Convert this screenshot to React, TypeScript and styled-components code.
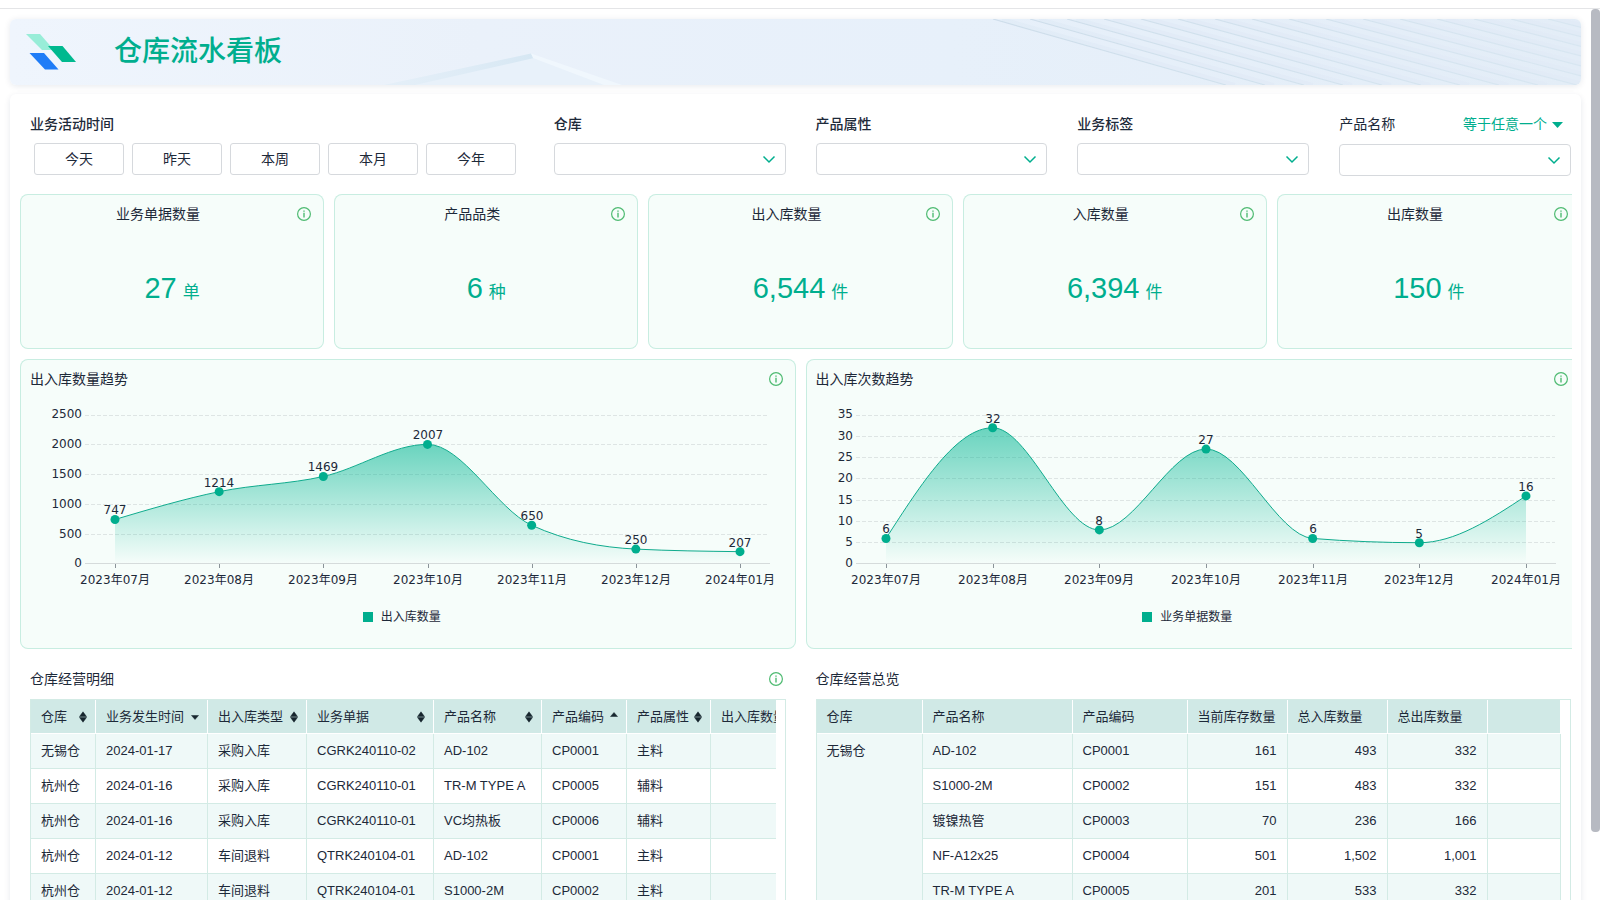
import React, { useEffect, useLayoutEffect, useRef, useState } from 'react';
import styled, { createGlobalStyle, css } from 'styled-components';

const ACCENT = '#00ae8e';
const INK = '#1d2939';
const LINE = '#d3ebe5';

const GlobalStyle = createGlobalStyle`
  *, *::before, *::after { box-sizing: border-box; }
  body {
    margin: 0;
    background: #fff;
    color: ${INK};
    font-family: "Liberation Sans", "Noto Sans CJK SC", sans-serif;
    font-size: 14px;
    line-height: 20px;
  }
  button, select { font: inherit; color: inherit; }
`;

/* ---------- page frame ---------- */

const Page = styled.div`
  position: relative;
  height: 100vh;
  padding-top: 8px;
  overflow: hidden;
`;

const Scroller = styled.div`
  height: 100%;
  overflow-y: auto;
  scrollbar-width: none;
  border-top: 1px solid #e4e5e7;
  padding: 10px 19px 10px 10px;
`;

const Thumb = styled.div`
  position: absolute;
  right: 0;
  top: 9px;
  width: 9px;
  border-radius: 4px;
  background: #b7bac2;
`;

const Banner = styled.header`
  position: relative;
  display: flex;
  align-items: center;
  height: 66px;
  padding-left: 16px;
  gap: 38px;
  border-radius: 6px;
  overflow: hidden;
  background: linear-gradient(90deg, #eff5fd 0%, #eaf1fa 30%, #e7f0fa 60%, #e3edf7 100%);
`;

const BannerShadow = styled.div`
  border-radius: 6px;
  box-shadow: 0 1px 6px rgba(20, 40, 80, 0.1);
`;

const BannerArt = styled.svg`
  position: absolute;
  inset: 0;
  width: 100%;
  height: 100%;
`;

const Logo = styled.svg`
  position: relative;
  flex: none;
`;

const Title = styled.h1`
  position: relative;
  margin: 0;
  font-size: 28px;
  line-height: 40px;
  font-weight: 500;
  color: ${ACCENT};
`;

const Panel = styled.main`
  margin-top: 9px;
  padding: 0 9px 10px 0;
  border-radius: 6px;
  box-shadow: 0 2px 6px rgba(20, 40, 80, 0.1);
  background: #fff;
`;

const Clip = styled.div`
  overflow: hidden;
`;

const Board = styled.div`
  width: calc(100% + 9px);
  margin-left: 5px;
`;

/* ---------- filters ---------- */

const Filters = styled.form`
  display: grid;
  grid-template-columns: 2fr repeat(4, 1fr);
  height: 100px;
  padding-top: 20px;
`;

const Field = styled.div`
  padding: 0 15px;
  min-width: 0;
`;

const LabelRow = styled.div<{ $loose?: boolean }>`
  display: flex;
  justify-content: space-between;
  height: 20px;
  margin-bottom: ${(p) => (p.$loose ? 10 : 9)}px;
`;

const Label = styled.label<{ $plain?: boolean }>`
  font-weight: ${(p) => (p.$plain ? 400 : 500)};
  color: ${INK};
`;

const DateButtons = styled.div`
  display: flex;
  gap: 8px;
  padding-left: 4px;
`;

const DateButton = styled.button`
  width: 90px;
  height: 32px;
  padding: 0;
  border: 1px solid #d6d9dd;
  border-radius: 3px;
  background: #fff;
`;

const SelectBox = styled.div`
  position: relative;
  svg {
    position: absolute;
    right: 10px;
    top: 12px;
    pointer-events: none;
  }
`;

const Select = styled.select`
  appearance: none;
  display: block;
  width: 100%;
  height: 32px;
  padding: 0 30px 0 10px;
  border: 1px solid #d6d9dd;
  border-radius: 4px;
  background: #fff;
`;

const MatchBox = styled.div`
  position: relative;
  margin-right: 8px;
  color: ${ACCENT};
  svg {
    position: absolute;
    right: 0;
    top: 8px;
    pointer-events: none;
  }
`;

const MatchSelect = styled.select`
  appearance: none;
  display: block;
  height: 20px;
  padding: 0 16px 0 0;
  border: 0;
  background: transparent;
`;

/* ---------- widgets ---------- */

const Row = styled.section<{ $cols: number }>`
  display: grid;
  grid-template-columns: repeat(${(p) => p.$cols}, minmax(0, 1fr));
  gap: 10px;
  margin: 0 5px 10px;
`;

const Card = styled.article<{ $tinted?: boolean; $height: number }>`
  display: flex;
  flex-direction: column;
  min-height: ${(p) => p.$height}px;
  border-radius: 8px;
  ${(p) =>
    p.$tinted &&
    css`
      background: #f6fdfa;
      box-shadow: inset 0 0 0 1px #c8ede1;
    `}
`;

const CardHead = styled.div<{ $center?: boolean }>`
  display: flex;
  align-items: center;
  height: 40px;
  padding: 0 12px 0 ${(p) => (p.$center ? 0 : 10)}px;
  h2 {
    flex: 1;
    margin: 0;
    font-size: 14px;
    font-weight: 400;
    text-align: left;
    ${(p) => p.$center && css`text-align: center;`}
  }
`;

const InfoButton = styled.button`
  display: flex;
  width: 16px;
  height: 16px;
  padding: 1px;
  border: 0;
  background: none;
`;

const Figure = styled.p`
  display: flex;
  flex: 1;
  justify-content: center;
  align-items: baseline;
  gap: 6px;
  margin: 0;
  padding-top: 34px;
  font-size: 29px;
  line-height: 40px;
  color: ${ACCENT};
  small {
    font-size: 17px;
  }
`;

const Plot = styled.div`
  min-width: 0;
  height: 200px;
  svg {
    display: block;
  }
  text {
    font-family: "DejaVu Sans", "Noto Sans CJK SC", sans-serif;
    font-size: 12px;
    fill: ${INK};
  }
`;

const Legend = styled.div`
  display: flex;
  justify-content: center;
  align-items: center;
  gap: 8px;
  height: 36px;
  padding-right: 12px;
  font-size: 12px;
  &::before {
    content: '';
    width: 10px;
    height: 10px;
    background: ${ACCENT};
  }
`;

/* ---------- tables ---------- */

const Frame = styled.div`
  flex: 1;
  margin: 0 10px;
  padding-right: 9px;
  border: 1px solid ${LINE};
`;

const Table = styled.table<{ $min?: number }>`
  width: 100%;
  min-width: ${(p) => p.$min ?? 0}px;
  table-layout: fixed;
  border-collapse: separate;
  border-spacing: 0;
  font-size: 13px;
`;

const Th = styled.th`
  height: 34px;
  padding: 0 8px 0 10px;
  border-right: 1px solid #fff;
  border-bottom: 1px solid #fff;
  background: #d0e9e6;
  font-weight: 400;
  text-align: left;
  white-space: nowrap;
`;

const ThInner = styled.span`
  display: flex;
  justify-content: space-between;
  align-items: center;
`;

const Td = styled.td<{ $stripe?: boolean; $num?: boolean }>`
  height: 35px;
  padding: 7px 10px;
  border-right: 1px solid ${LINE};
  border-bottom: 1px solid ${LINE};
  background: ${(p) => (p.$stripe ? '#eff9f8' : '#fff')};
  text-align: ${(p) => (p.$num ? 'right' : 'left')};
  vertical-align: top;
  white-space: nowrap;
`;

/* ---------- drawings ---------- */

const Chevron = () => (
  <svg width="14" height="9" viewBox="0 0 14 9" fill="none" stroke={ACCENT} strokeWidth="1.5" aria-hidden="true">
    <path d="M1.5 1.5 7 7l5.5-5.5" />
  </svg>
);

const InfoIcon = () => (
  <svg width="14" height="14" viewBox="0 0 14 14" fill="none" stroke="#4fbb72" aria-hidden="true">
    <circle cx="7" cy="7" r="6.4" strokeWidth="1.2" />
    <path d="M7 5.8v4.6M7 3.4v1.3" strokeWidth="1.4" />
  </svg>
);

type Sort = 'both' | 'up' | 'down' | null;

const SortIcon = ({ sort }: { sort: Sort }) => (
  <svg width="8" height="12" viewBox="0 0 8 12" fill="#17262e" aria-hidden="true">
    {sort === 'both' && <path d="M.5 5.6 4 .8l3.500 4.800zM.5 6.400 4 11.200l3.500-4.800z" stroke="#17262e" strokeWidth="0.5" strokeLinejoin="round" />}
    {sort === 'up' && <path d="M.5 5.5 4 1.500l3.500 4z" stroke="#17262e" strokeWidth="0.5" strokeLinejoin="round" />}
    {sort === 'down' && <path d="M.5 4.500 4 8.500l3.500-4z" stroke="#17262e" strokeWidth="0.5" strokeLinejoin="round" />}
  </svg>
);

const ridges = Array.from({ length: 17 }, (_, i) => i);

const BannerDrawing = () => (
  <BannerArt viewBox="0 0 1571 66" preserveAspectRatio="xMaxYMid slice" aria-hidden="true">
    <defs>
      <linearGradient id="fold" x1="0" x2="1" y1="0" y2="0">
        <stop offset="0" stopColor="#dfecf6" stopOpacity="0.4" />
        <stop offset="1" stopColor="#d6e7f3" />
      </linearGradient>
      <linearGradient id="ridgeFade" x1="983" x2="1571" y1="0" y2="0" gradientUnits="userSpaceOnUse">
        <stop offset="0" stopColor="#c9dae8" />
        <stop offset="0.6" stopColor="#d1e0ed" />
        <stop offset="1" stopColor="#d6e5f0" />
      </linearGradient>
    </defs>
    <path d="M374 66 522 35 524 39 595 66z" fill="#e8f1fa" />
    <path d="M374 66 521 34.5 524 39 405 66z" fill="url(#fold)" />
    <path d="M521 34.5 612 66H594L523 39z" fill="#f0f7fd" />
    {ridges.map((i) => {
      const top = 983 + i * 37;
      const end = 1216 + i * 39;
      return (
        <g key={i} stroke="url(#ridgeFade)">
          <path d={`M${top + 9} 0 ${end + 9} 66`} strokeWidth="4" opacity="0.15" />
          <path d={`M${top} 0 ${end} 66`} strokeWidth="1.2" opacity="0.85" />
        </g>
      );
    })}
  </BannerArt>
);

/* ---------- area chart ---------- */

type Point = [number, number];

// Monotone cubic interpolation, so the curve never overshoots a value.
function monotonePath(pts: Point[]): string {
  const n = pts.length;
  const slope = (i: number) => (pts[i + 1][1] - pts[i][1]) / (pts[i + 1][0] - pts[i][0]);
  const m: number[] = new Array(n).fill(0);
  for (let i = 1; i < n - 1; i++) {
    const a = slope(i - 1);
    const b = slope(i);
    m[i] = a * b <= 0 ? 0 : Math.sign(a) * Math.min(Math.abs(a), Math.abs(b), Math.abs(a + b) / 4) * 2;
  }
  m[0] = (3 * slope(0) - m[1]) / 2;
  m[n - 1] = (3 * slope(n - 2) - m[n - 2]) / 2;
  let d = `M${pts[0][0]} ${pts[0][1]}`;
  for (let i = 0; i < n - 1; i++) {
    const dx = (pts[i + 1][0] - pts[i][0]) / 3;
    d += `C${pts[i][0] + dx} ${pts[i][1] + m[i] * dx} ${pts[i + 1][0] - dx} ${pts[i + 1][1] - m[i + 1] * dx} ${pts[i + 1][0]} ${pts[i + 1][1]}`;
  }
  return d;
}

const MONTHS = ['2023年07月', '2023年08月', '2023年09月', '2023年10月', '2023年11月', '2023年12月', '2024年01月'];
const TOP = 16;
const BASE = 165;
const EDGE = 30;
const RIGHT = 26;

interface ChartProps {
  id: string;
  name: string;
  values: number[];
  max: number;
  step: number;
  left: number;
}

function AreaChart({ id, name, values, max, step, left }: ChartProps) {
  const box = useRef<HTMLDivElement>(null);
  const [width, setWidth] = useState(776);
  useLayoutEffect(() => {
    const el = box.current;
    if (!el) return;
    const measure = () => setWidth(Math.round(el.clientWidth));
    measure();
    const ro = new ResizeObserver(measure);
    ro.observe(el);
    return () => ro.disconnect();
  }, []);

  const right = width - RIGHT;
  const y = (v: number) => BASE - ((BASE - TOP) * v) / max;
  const gap = (right - left - EDGE * 2) / (values.length - 1);
  const pts = values.map((v, i): Point => [left + EDGE + gap * i, y(v)]);
  const path = monotonePath(pts);
  const ticks: number[] = [];
  for (let v = 0; v <= max; v += step) ticks.push(v);

  return (
    <Plot ref={box}>
      <svg width={width} height="200" role="img" aria-label={name}>
        <defs>
          <linearGradient id={id} x1="0" x2="0" y1="0" y2="1">
            <stop offset="0" stopColor="#00b592" stopOpacity="0.57" />
            <stop offset="1" stopColor="#00b592" stopOpacity="0" />
          </linearGradient>
        </defs>
        {ticks.map((v) => (
          <g key={v}>
            {v > 0 && (
              <line x1={left} x2={right - 1} y1={Math.floor(y(v)) + 0.5} y2={Math.floor(y(v)) + 0.5} stroke="#dee5e4" strokeDasharray="4 2" />
            )}
            <text x={left - 3} y={Math.ceil(y(v)) + 3} textAnchor="end">
              {v}
            </text>
          </g>
        ))}
        <path d={`${path}L${pts[pts.length - 1][0]} ${BASE}L${pts[0][0]} ${BASE}Z`} fill={`url(#${id})`} />
        <line x1={left} x2={right} y1={BASE - 0.5} y2={BASE - 0.5} stroke="#d5dbdb" />
        <path d={path} fill="none" stroke="#0fab8d" />
        {pts.map(([px, py], i) => (
          <g key={i}>
            <line x1={Math.round(px) + 0.5} x2={Math.round(px) + 0.5} y1={BASE} y2={BASE + 4} stroke="#8a9399" />
            <circle cx={px} cy={py} r="4.5" fill={ACCENT} />
            <text x={Math.round(px)} y={Math.round(py) - 5} textAnchor="middle">
              {values[i]}
            </text>
            <text x={Math.round(px)} y="185" textAnchor="middle">
              {MONTHS[i]}
            </text>
          </g>
        ))}
      </svg>
    </Plot>
  );
}

/* ---------- data ---------- */

const FIGURES = [
  ['业务单据数量', '27', '单'],
  ['产品品类', '6', '种'],
  ['出入库数量', '6,544', '件'],
  ['入库数量', '6,394', '件'],
  ['出库数量', '150', '件'],
];

const DETAIL_COLS: [string, number, Sort][] = [
  ['仓库', 65, 'both'],
  ['业务发生时间', 112, 'down'],
  ['出入库类型', 99, 'both'],
  ['业务单据', 127, 'both'],
  ['产品名称', 108, 'both'],
  ['产品编码', 85, 'up'],
  ['产品属性', 84, 'both'],
  ['出入库数量', 100, null],
];

const DETAIL_ROWS = [
  ['无锡仓', '2024-01-17', '采购入库', 'CGRK240110-02', 'AD-102', 'CP0001', '主料', ''],
  ['杭州仓', '2024-01-16', '采购入库', 'CGRK240110-01', 'TR-M TYPE A', 'CP0005', '辅料', ''],
  ['杭州仓', '2024-01-16', '采购入库', 'CGRK240110-01', 'VC均热板', 'CP0006', '辅料', ''],
  ['杭州仓', '2024-01-12', '车间退料', 'QTRK240104-01', 'AD-102', 'CP0001', '主料', ''],
  ['杭州仓', '2024-01-12', '车间退料', 'QTRK240104-01', 'S1000-2M', 'CP0002', '主料', ''],
];

const SUMMARY_COLS: [string, number | undefined][] = [
  ['仓库', 106],
  ['产品名称', 150],
  ['产品编码', 115],
  ['当前库存数量', 100],
  ['总入库数量', 100],
  ['总出库数量', 100],
  ['', undefined],
];

const SUMMARY_ROWS = [
  ['AD-102', 'CP0001', '161', '493', '332', ''],
  ['S1000-2M', 'CP0002', '151', '483', '332', ''],
  ['镀镍热管', 'CP0003', '70', '236', '166', ''],
  ['NF-A12x25', 'CP0004', '501', '1,502', '1,001', ''],
  ['TR-M TYPE A', 'CP0005', '201', '533', '332', ''],
];

/* ---------- composed parts ---------- */

const Head = ({ title, center, info = true }: { title: string; center?: boolean; info?: boolean }) => (
  <CardHead $center={center}>
    <h2>{title}</h2>
    {info && (
      <InfoButton type="button" aria-label={`${title}说明`}>
        <InfoIcon />
      </InfoButton>
    )}
  </CardHead>
);

const Dropdown = ({ id }: { id: string }) => (
  <SelectBox>
    <Select id={id} defaultValue="">
      <option value="" />
    </Select>
    <Chevron />
  </SelectBox>
);

const FILTERS = [
  ['warehouse', '仓库'],
  ['attribute', '产品属性'],
  ['tag', '业务标签'],
];

export default function App() {
  const scroller = useRef<HTMLDivElement>(null);
  const [thumb, setThumb] = useState({ height: 0, shift: 0 });

  const track = () => {
    const el = scroller.current;
    if (!el) return;
    const ratio = el.clientHeight / el.scrollHeight;
    setThumb({ height: ratio < 1 ? el.clientHeight * ratio : 0, shift: el.scrollTop * ratio });
  };

  useEffect(() => {
    track();
    window.addEventListener('resize', track);
    return () => window.removeEventListener('resize', track);
  }, []);

  return (
    <Page>
      <GlobalStyle />
      <Scroller ref={scroller} onScroll={track}>
        <BannerShadow>
          <Banner>
            <BannerDrawing />
            <Logo width="50" height="36" viewBox="0 0 50 36" aria-hidden="true">
              <path d="M0 0h14l14 16H16z" fill="#98edd8" />
              <path d="M22 12h14.5l13.5 16H36z" fill="#00b98f" />
              <path d="M3.5 19H18l14.5 16.500H19z" fill="#1f7cf7" />
            </Logo>
            <Title>仓库流水看板</Title>
          </Banner>
        </BannerShadow>

        <Panel>
          <Clip>
            <Board>
              <Filters>
                <Field role="group" aria-labelledby="period">
                  <LabelRow>
                    <Label as="span" id="period">
                      业务活动时间
                    </Label>
                  </LabelRow>
                  <DateButtons>
                    {['今天', '昨天', '本周', '本月', '今年'].map((t) => (
                      <DateButton type="button" key={t}>
                        {t}
                      </DateButton>
                    ))}
                  </DateButtons>
                </Field>
                {FILTERS.map(([id, text]) => (
                  <Field key={id}>
                    <LabelRow>
                      <Label htmlFor={id}>{text}</Label>
                    </LabelRow>
                    <Dropdown id={id} />
                  </Field>
                ))}
                <Field>
                  <LabelRow $loose>
                    <Label htmlFor="product" $plain>
                      产品名称
                    </Label>
                    <MatchBox>
                      <MatchSelect aria-label="匹配方式">
                        <option>等于任意一个</option>
                      </MatchSelect>
                      <svg width="11" height="6" viewBox="0 0 11 6" fill={ACCENT} aria-hidden="true">
                        <path d="M0 0h11L5.5 6z" />
                      </svg>
                    </MatchBox>
                  </LabelRow>
                  <Dropdown id="product" />
                </Field>
              </Filters>

              <Row $cols={5}>
                {FIGURES.map(([title, value, unit]) => (
                  <Card key={title} $tinted $height={155}>
                    <Head title={title} center />
                    <Figure>
                      {value}
                      <small>{unit}</small>
                    </Figure>
                  </Card>
                ))}
              </Row>

              <Row $cols={2}>
                <Card $tinted $height={290}>
                  <Head title="出入库数量趋势" />
                  <AreaChart id="qtyFill" name="出入库数量趋势" values={[747, 1214, 1469, 2007, 650, 250, 207]} max={2500} step={500} left={65} />
                  <Legend>出入库数量</Legend>
                </Card>
                <Card $tinted $height={290}>
                  <Head title="出入库次数趋势" />
                  <AreaChart id="countFill" name="出入库次数趋势" values={[6, 32, 8, 27, 6, 5, 16]} max={35} step={5} left={50} />
                  <Legend>业务单据数量</Legend>
                </Card>
              </Row>

              <Row $cols={2}>
                <Card $height={285}>
                  <Head title="仓库经营明细" />
                  <Frame>
                    <Clip>
                      <Table $min={780}>
                        <colgroup>
                          {DETAIL_COLS.map(([name, w]) => (
                            <col key={name} width={w} />
                          ))}
                        </colgroup>
                        <thead>
                          <tr>
                            {DETAIL_COLS.map(([name, , sort]) => (
                              <Th key={name} scope="col">
                                <ThInner>
                                  {name}
                                  {sort && <SortIcon sort={sort} />}
                                </ThInner>
                              </Th>
                            ))}
                          </tr>
                        </thead>
                        <tbody>
                          {DETAIL_ROWS.map((row, r) => (
                            <tr key={r}>
                              {row.map((cell, c) => (
                                <Td key={c} $stripe={r % 2 === 0}>
                                  {cell}
                                </Td>
                              ))}
                            </tr>
                          ))}
                        </tbody>
                      </Table>
                    </Clip>
                  </Frame>
                </Card>
                <Card $height={285}>
                  <Head title="仓库经营总览" info={false} />
                  <Frame>
                    <Table>
                      <colgroup>
                        {SUMMARY_COLS.map(([name, w]) => (
                          <col key={name} width={w} />
                        ))}
                      </colgroup>
                      <thead>
                        <tr>
                          {SUMMARY_COLS.map(([name]) => (
                            <Th key={name} scope="col">
                              {name}
                            </Th>
                          ))}
                        </tr>
                      </thead>
                      <tbody>
                        {SUMMARY_ROWS.map((row, r) => (
                          <tr key={r}>
                            {r === 0 && (
                              <Td $stripe rowSpan={SUMMARY_ROWS.length}>
                                无锡仓
                              </Td>
                            )}
                            {row.map((cell, c) => (
                              <Td key={c} $stripe={r % 2 === 0} $num={c > 1}>
                                {cell}
                              </Td>
                            ))}
                          </tr>
                        ))}
                      </tbody>
                    </Table>
                  </Frame>
                </Card>
              </Row>
            </Board>
          </Clip>
        </Panel>
      </Scroller>
      <Thumb style={{ height: thumb.height, transform: `translateY(${thumb.shift}px)` }} />
    </Page>
  );
}
